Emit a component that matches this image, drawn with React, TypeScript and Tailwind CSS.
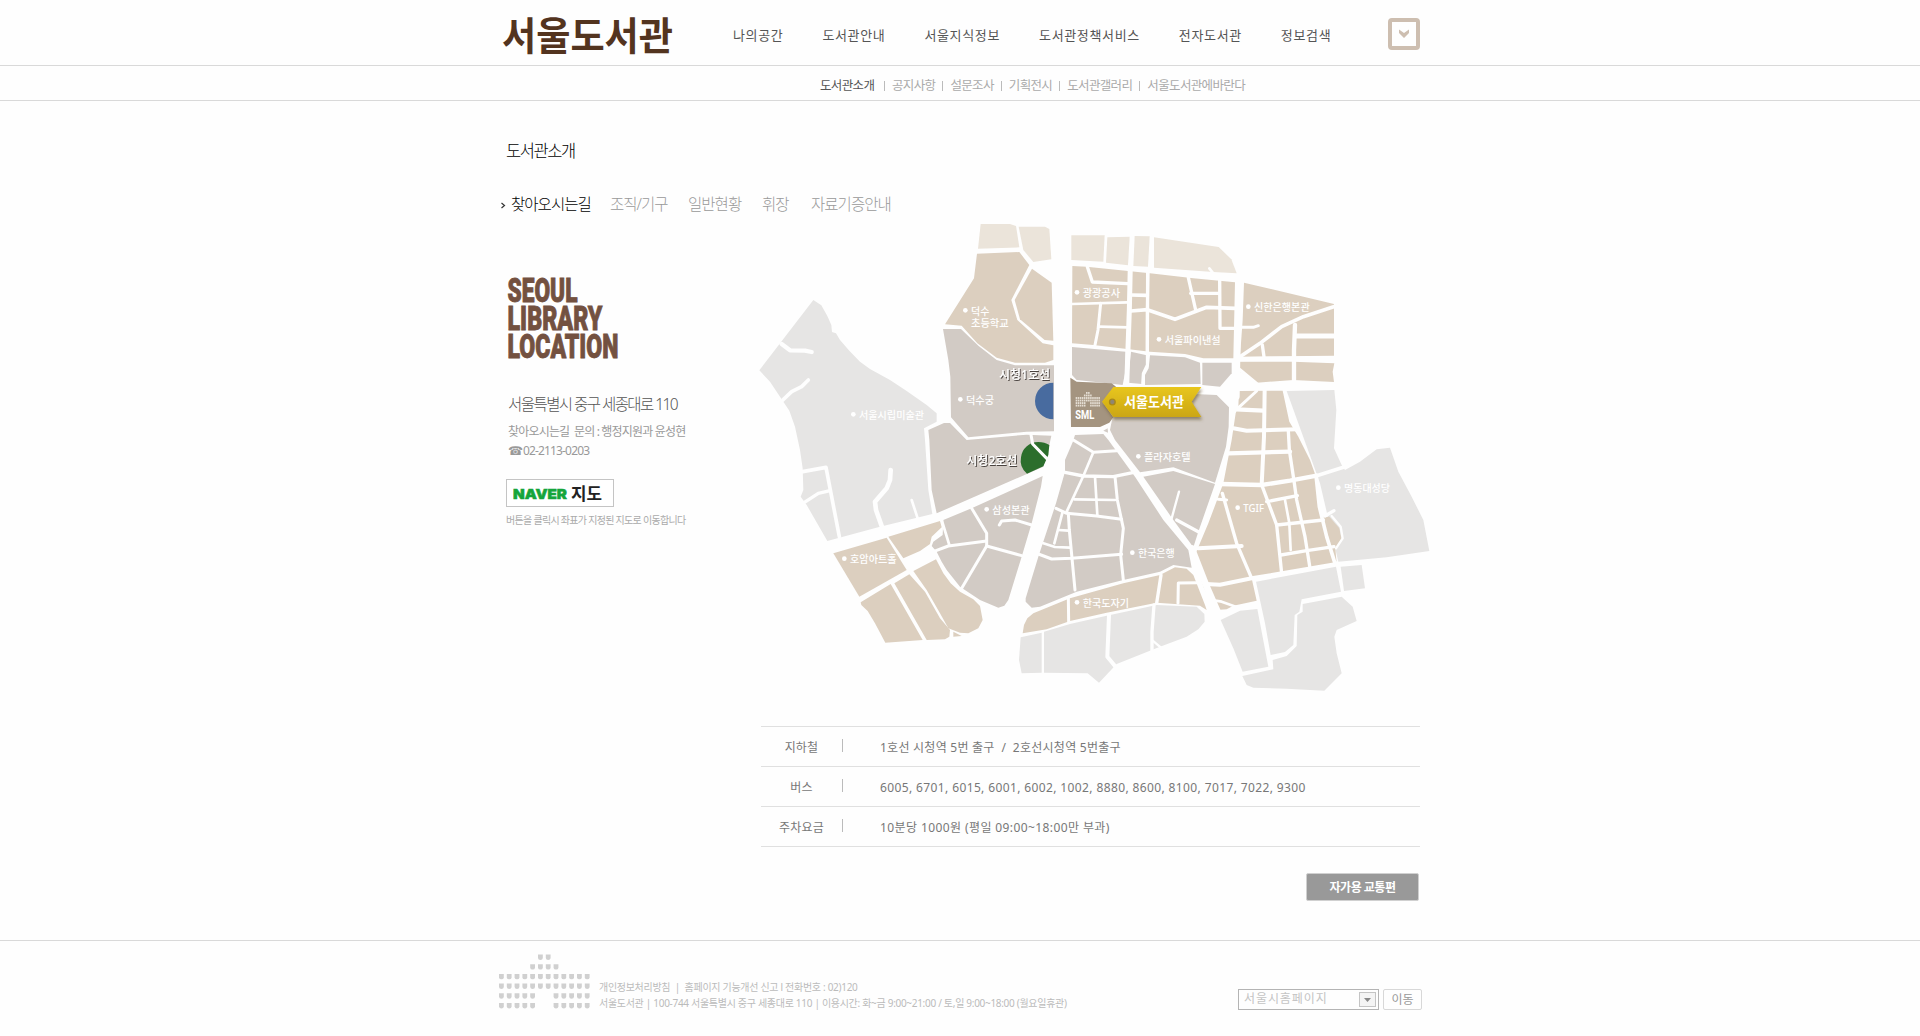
import React from "react";

const KR = "font-['Noto_Sans','Noto_Sans_CJK_KR',sans-serif]";

const BEIGE = "#dccfbf";
const PALE = "#ebe4da";
const TAUPE = "#d2cbc5";
const GREY = "#e6e5e4";

type Road = [string, number];

const Areas = ({ fill, list }: { fill: string; list: string[] }) => (
  <g fill={fill}>
    {list.map((p) => (
      <polygon key={p} points={p} />
    ))}
  </g>
);

const Roads = ({ list }: { list: Road[] }) => (
  <g fill="none" stroke="#fefefe" strokeLinejoin="round" strokeLinecap="round">
    {list.map(([p, w]) => (
      <polyline key={p} points={p} strokeWidth={w} />
    ))}
  </g>
);

const Place = ({ x, y, w, t, dot = true }: { x: number; y: number; w: number; t: string; dot?: boolean }) => (
  <g fill="#fff">
    {dot && <circle cx={x - 17} cy={y - 3} r="7" />}
    <text x={x} y={y + 11} fontSize="30" fontWeight="500" textLength={w} lengthAdjust="spacingAndGlyphs">
      {t}
    </text>
  </g>
);

const Station = ({ x, y, t }: { x: number; y: number; t: string }) => (
  <text
    x={x}
    y={y + 13}
    fill="#fff"
    fontSize="36"
    fontWeight="500"
    textLength="153"
    lengthAdjust="spacingAndGlyphs"
    filter="url(#textShadow)"
  >
    {t}
  </text>
);

const hallRows: number[][] = [
  [5, 6],
  [4, 5, 6, 7],
  [0, 1, 2, 3, 4, 5, 6, 7, 8, 9, 10, 11],
  [0, 1, 2, 3, 4, 5, 6, 7, 8, 9, 10, 11],
  [0, 1, 2, 3, 4, 7, 8, 9, 10, 11],
  [0, 1, 2, 3, 4, 7, 8, 9, 10, 11],
];

function LocationMap() {
  return (
    <svg className={`block h-[480px] w-[680px] shrink-0 ${KR}`} viewBox="45 15 2040 1440">
      <defs>
        <linearGradient id="tag" x1="0" y1="0" x2="0" y2="1">
          <stop offset="0" stopColor="#e8c61f" />
          <stop offset="1" stopColor="#cba612" />
        </linearGradient>
        <filter id="tagShadow" x="-10%" y="-20%" width="120%" height="160%">
          <feDropShadow dx="3" dy="8" stdDeviation="5" floodColor="#5a4a20" floodOpacity="0.55" />
        </filter>
        <filter id="textShadow" x="-10%" y="-20%" width="120%" height="150%">
          <feDropShadow dx="3" dy="3" stdDeviation="2" floodColor="#3a3633" floodOpacity="0.9" />
        </filter>
      </defs>

      {/* West blocks */}
      <Areas
        fill={GREY}
        list={["220,270 244,286 262,318 274,345 276,366 288,370 300,390 328,422 360,455 390,477 450,510 500,543 560,585 590,610 590,635 552,655 555,690 565,840 577,912 420,950 262,993 200,885 182,860 190,840 188,775 180,720 165,650 148,602 130,575 120,560 90,515 58,481"]}
      />
      <Areas fill={PALE} list={["722,42 810,42 828,48 838,112 714,116", "836,50 915,50 928,57 934,148 880,156 850,120"]} />
      <Areas
        fill={BEIGE}
        list={[
          "711,131 838,126 868,165 814,270 832,330 908,400 940,406 940,450 915,458 825,458 770,443 712,400 665,347 615,343 702,205",
          "876,176 935,218 940,392 914,390 840,328 824,270",
        ]}
      />
      <Areas
        fill={TAUPE}
        list={[
          "609,357 663,357 716,408 770,450 825,466 942,466 942,664 860,665 685,682 633,622 631,500 625,450",
          "565,660 612,639 630,639 680,690 860,674 934,677 927,710 910,770 590,910 575,840 568,690",
        ]}
      />
      <path d="M940 518A55 55 0 0 0 940 628Z" fill="#486b9f" />
      <path d="M861 791A51 51 0 0 1 843 742A52 50 0 0 1 895 696Q914 696 928 705L925 735L910 769Z" fill="#2c6e2c" />
      <Roads
        list={[
          ["125,402 150,421 195,422 215,426", 13],
          ["124,574 155,545 185,530 205,510", 11],
          ["188,785 258,772 298,980", 11],
          ["192,878 235,850 270,842", 10],
          ["452,780 450,810 440,835 405,875 408,900 425,948", 14],
          ["515,870 533,925", 8],
          ["873,674 878,702 920,745", 9],
        ]}
      />

      <g transform="translate(0 690)">
        <Areas
          fill={TAUPE}
          list={["610,240 695,205 908,108 903,140 875,250 845,350 805,480 793,497 775,503 720,480 660,440 620,390 605,365 590,335 575,318 580,305 608,285"]}
        />
        <Areas
          fill={BEIGE}
          list={[
            "280,340 440,293 500,390 358,470",
            "445,290 600,243 605,262 575,290 570,312 540,333 490,355",
            "520,393 588,358 610,400 632,430 660,455 700,478 720,498 728,540 715,565 685,580 660,578 625,565 600,520 560,450",
            "463,430 508,403 555,455 600,535 630,570 628,590 615,598 560,600",
            "362,487 452,432 548,600 436,608 405,550 383,513 364,495",
            "640,575 665,588 640,590",
          ]}
        />
        <Roads
          list={[
            ["605,240 628,315", 8],
            ["580,335 625,318 740,303", 9],
            ["695,205 740,280 740,318 665,445", 9],
            ["740,318 845,347", 9],
            ["778,255 785,243 825,240 875,255", 9],
          ]}
        />
      </g>

      {/* North-east blocks */}
      <g transform="translate(960 0)">
        <Areas
          fill={GREY}
          list={["680,543 823,540 829,600 822,715 845,765 855,780 900,755 950,718 990,713 1015,785 1055,860 1090,930 1108,1023 980,1042 835,1055 780,820"]}
        />
        <Areas
          fill={PALE}
          list={[
            "34,76 134,76 130,155 34,150",
            "142,82 209,80 204,166 138,158",
            "224,78 269,79 264,170 220,168",
            "282,82 476,111 514,148 530,190 460,186 282,173",
          ]}
        />
        <Areas
          fill={BEIGE}
          list={[
            "37,168 80,170 270,190 400,205 525,217 520,445 430,445 375,432 270,425 100,405 36,400",
            "552,218 822,282 822,437 740,438 540,441 548,330",
            "540,455 700,455 823,460 818,485 822,516 700,510 590,518 540,485",
            "537,543 668,542 688,635 715,680 750,750 768,800 785,920 808,920 838,955 845,990 826,1015 830,1060 575,1105 590,1172 520,1187 500,1198 470,1200 430,1130 405,1035 445,940 490,820 515,690 527,610 535,590",
          ]}
        />
        <Areas
          fill={TAUPE}
          list={[
            "36,411 197,425 195,490 188,525 100,515 50,510 36,495",
            "213,425 260,436 260,470 248,495 246,522 203,518",
            "270,436 375,442 420,458 422,522 255,525 255,495 266,475",
            "427,458 515,458 515,490 480,530 427,525",
            "160,610 400,552 470,555 507,592 506,650 498,710 465,818 340,772 240,787 165,690 150,660",
            "250,800 340,783 465,822 415,965 400,1012 340,930",
            "45,675 130,672 145,690 225,800 310,930 385,1020 395,1073 340,1065 300,1085 190,1110 50,1145 -60,1190 -85,1193 -103,1175 -103,1165 -65,1040 -12,880 15,785 15,750 38,697",
          ]}
        />
        <path d="M31 503L50 515 155 520 168 530 128 575 160 622 148 638 120 651 33 651Z" fill="#a49480" />
        <path d="M130 662L143 655 144 668Z" fill={TAUPE} />
        <Roads
          list={[
            ["448,175 460,190", 8],
            ["211,165 208,300 200,530", 15],
            ["264,185 262,300 262,465 250,490 248,520", 9],
            ["263,185 262,430", 10],
            ["82,170 97,216 203,221", 10],
            ["36,282 203,277", 8],
            ["122,280 114,360 105,405", 9],
            ["118,350 203,352", 8],
            ["213,255 262,256", 11],
            ["213,303 262,299 345,328 440,292 527,295", 11],
            ["385,203 407,300", 10],
            ["392,250 478,250", 10],
            ["479,210 480,355 530,355", 10],
            ["536,200 530,560", 18],
            ["540,440 600,400 665,350 730,320 830,287", 11],
            ["530,352 580,352 595,347", 9],
            ["607,405 612,440", 10],
            ["705,345 702,420 702,510", 13],
            ["707,378 822,378", 15],
            ["540,447 823,445", 13],
            ["538,478 595,525", 10],
            ["530,598 590,543", 9],
            ["528,598 610,602", 13],
            ["614,540 612,680 605,825", 12],
            ["520,655 560,662 712,658", 12],
            ["505,730 690,725", 13],
            ["685,662 688,720 703,820 710,870 735,980 750,1075", 10],
            ["480,822 605,825 690,812 770,797", 13],
            ["770,797 850,772", 11],
            ["607,830 650,945 665,1090", 10],
            ["620,875 712,857", 10],
            ["675,870 688,940 692,1020", 8],
            ["650,945 790,930", 10],
            ["663,1035 740,1022 822,1010", 10],
            ["768,795 778,890 800,980 828,1070", 11],
            ["795,918 822,902", 10],
            ["815,918 842,950 848,985 828,1015", 7],
            ["475,868 500,870", 9],
            ["487,850 530,1000 575,1105", 10],
            ["415,1015 545,1008", 12],
            ["395,1015 438,1125 475,1210", 20],
            ["438,1122 480,1124 575,1105 830,1062", 12],
            ["455,1170 485,1175 540,1195", 8],
            ["357,845 335,925", 7],
            ["350,930 415,965", 10],
            ["40,690 100,727 170,722", 9],
            ["100,727 70,798 20,905", 8],
            ["15,787 70,798 160,800 218,788", 10],
            ["105,800 112,915", 8],
            ["165,800 172,870 190,955 182,1035 190,1110", 9],
            ["43,868 165,870", 8],
            ["-12,895 20,910 110,918 185,928", 9],
            ["25,910 28,960 45,1140", 9],
            ["8,905 -17,1000", 8],
            ["-5,960 25,962", 8],
            ["-50,1000 -15,1011 30,1013", 8],
            ["-65,1032 -25,1047 35,1045 185,1033", 9],
            ["828,1060 848,1148", 12],
          ]}
        />
      </g>

      {/* South-east blocks */}
      <g transform="translate(960 690)">
        <Areas
          fill={BEIGE}
          list={["-112,580 -108,555 -98,535 -80,520 30,475 190,430 300,405 345,382 380,386 400,405 435,495 440,510 420,497 290,488 140,518 30,543 -40,568"]}
        />
        <Areas
          fill={GREY}
          list={[
            "-118,592 -55,578 -55,698 -115,700 -123,660",
            "-48,575 30,552 140,527 290,495 410,500 433,522 434,545 415,568 380,590 300,620 170,672 117,728 83,700 -48,698",
            "588,425 828,380 843,455 725,478 718,515 704,525 700,615 675,636 632,645 615,550",
            "842,380 905,375 915,445 852,453",
            "728,492 845,470 878,500 890,543 830,570 823,590 830,640 845,700 793,752 680,746 580,743 560,735 547,708 640,688 638,660 680,648 710,618 712,525 728,515",
            "482,540 540,512 592,507 625,680 548,695 520,625",
          ]}
        />
        <Roads
          list={[
            ["25,475 26,545", 9],
            ["303,405 290,490", 10],
            ["354,490 355,429 410,428", 9],
            ["147,525 142,650 168,682", 12],
            ["282,495 276,575 276,632", 10],
            ["278,602 302,622", 7],
          ]}
        />
      </g>

      <g fill="#e6dfd5">
        {hallRows.map((cols, r) => cols.map((c) => <rect key={`${r}-${c}`} x={1007 + c * 6.2} y={546 + r * 7.6} width="4.6" height="5.6" />))}
      </g>
      <text x="1006" y="627" fill="#fff" fontSize="37" fontWeight="700" fontFamily="Roboto, sans-serif" textLength="57" lengthAdjust="spacingAndGlyphs">SML</text>

      <path d="M1086 575L1120 531H1384L1355 575L1384 621H1120Z" fill="url(#tag)" filter="url(#tagShadow)" />
      <circle cx="1117" cy="576" r="8.5" fill="#8f8672" stroke="#a8881a" strokeWidth="4" />
      <text x="1152" y="591" fill="#fff" fontSize="40" fontWeight="700" textLength="180" lengthAdjust="spacingAndGlyphs">서울도서관</text>

      <Place x={693} y={304} w={55} t="덕수" />
      <Place x={693} y={341} w={113} t="초등학교" dot={false} />
      <Place x={678} y={571} w={84} t="덕수궁" />
      <Place x={357} y={616} w={195} t="서울시립미술관" />
      <Place x={1028} y={250} w={112} t="광광공사" />
      <Place x={1542} y={293} w={167} t="신한은행본관" />
      <Place x={1274} y={391} w={168} t="서울파이낸설" />
      <Place x={1212} y={742} w={140} t="플라자호텔" />
      <Place x={1194} y={1031} w={110} t="한국은행" />
      <Place x={1028} y={1180} w={139} t="한국도자기" />
      <Place x={1510} y={896} w={62} t="TGIF" />
      <Place x={1812} y={836} w={138} t="명동대성당" />
      <Place x={757} y={901} w={112} t="삼성본관" />
      <Place x={330} y={1049} w={140} t="호암아트홀" />
      <Station x={777} y={495} t="시청1호선" />
      <Station x={679} y={753} t="시청2호선" />
    </svg>
  );
}

const nav = ["나의공간", "도서관안내", "서울지식정보", "도서관정책서비스", "전자도서관", "정보검색"];
const subnav = ["공지사항", "설문조사", "기획전시", "도서관갤러리", "서울도서관에바란다"];
const rows: [string, string, string][] = [
  ["지하철", "1호선 시청역 5번 출구  /  2호선시청역 5번출구", "tracking-[0.25px]"],
  ["버스", "6005, 6701, 6015, 6001, 6002, 1002, 8880, 8600, 8100, 7017, 7022, 9300", "tracking-[0.38px]"],
  ["주차요금", "10분당 1000원 (평일 09:00~18:00만 부과)", "tracking-[0.4px]"],
];

export default function App() {
  return (
    <div className={`h-[1036px] overflow-hidden bg-[#fefefe] whitespace-pre ${KR}`}>
      <header className="h-[66px] border-b border-[#d9d9d9]">
        <div className="mx-auto flex h-[65px] w-[920px]">
          <svg className="h-[65px] w-[175px]" viewBox="0 0 175 65">
            <text x="2" y="49.5" fontSize="39" fontWeight="700" fill="#53341f" textLength="171" lengthAdjust="spacingAndGlyphs">서울도서관</text>
          </svg>
          <nav className="ml-[58px] flex h-[72px] items-center gap-[39px] text-[13px] tracking-[0.64px] text-[#555]">
            {nav.map((n) => (
              <a key={n}>{n}</a>
            ))}
          </nav>
          <button className="mt-[18px] ml-auto flex size-8 items-center justify-center rounded-[4px] border-4 border-[#cdbeb0]">
            <svg className="size-[10px]" viewBox="0 0 10 10">
              <path d="M0 0.5L5 4L10 0.5V4L5 9L0 4Z" fill="#cdbeb0" />
            </svg>
          </button>
        </div>
      </header>

      <div className="h-[35px] border-b border-[#d9d9d9]">
        <div className="mx-auto flex h-[40px] w-[920px] items-center pl-[320px] text-[12.5px] tracking-[-0.65px] text-[#aaa]">
          <a className="mr-[9px] w-[55px] text-[#555]">도서관소개</a>
          {subnav.map((s) => (
            <React.Fragment key={s}>
              <i className="mr-[7px] h-[10px] w-px bg-[#bbb]" />
              <a className="mr-[7px]">{s}</a>
            </React.Fragment>
          ))}
        </div>
      </div>

      <main className="mx-auto flex h-[839px] w-[920px] flex-col">
        <h1 className="mt-[37px] ml-[6px] h-[26px] text-[16.5px] leading-[26px] font-light tracking-[-1.4px] text-black">도서관소개</h1>
        <div className="mt-[31px] flex h-5 items-center text-[15.5px] font-light tracking-[-0.95px] text-[#999]">
          <svg className="mt-px ml-px w-[5px]" viewBox="0 0 5 7">
            <path d="M0.5 1L3.5 3.5L0.5 6" fill="none" stroke="#333" strokeWidth="1.2" />
          </svg>
          <a className="ml-[5px] w-[99px] text-black">찾아오시는길</a>
          <a className="w-[78px]">조직/기구</a>
          <a className="w-[74px]">일반현황</a>
          <a className="w-[49px]">휘장</a>
          <a>자료기증안내</a>
        </div>

        <div className="flex">
          <aside className="flex w-[255px] shrink-0 flex-col pl-[6px]">
            <svg className="mt-[50px] h-[98px] w-[118px]" viewBox="0 -10 118 98">
              <g fill="#735140" stroke="#735140" strokeWidth="0.9" fontFamily="Roboto, sans-serif" fontSize="33" fontWeight="900">
                <text x="1.5" y="26.5" textLength="70" lengthAdjust="spacingAndGlyphs">SEOUL</text>
                <text x="1.5" y="54.5" textLength="95" lengthAdjust="spacingAndGlyphs">LIBRARY</text>
                <text x="1.5" y="83" textLength="111" lengthAdjust="spacingAndGlyphs">LOCATION</text>
              </g>
            </svg>
            <p className="mt-[29px] ml-[2px] h-6 text-[15.5px] leading-6 font-light tracking-[-1.55px] text-[#555]">서울특별시 중구 세종대로 110</p>
            <p className="mt-[7px] ml-[2px] h-[18px] text-[12px] leading-[18px] tracking-[-0.82px] text-[#999]">찾아오시는길  문의 : 행정지원과 윤성현</p>
            <p className="mt-px ml-[2px] flex h-[18px] items-center text-[12px] tracking-[-0.85px] text-[#999]">
              <span className="w-[15px] font-['DejaVu_Sans'] text-[12px]">☎</span>02-2113-0203
            </p>
            <button className="mt-[19px] flex h-7 w-[108px] items-center border border-[#c4c4c4] bg-white pl-[6px]">
              <svg className="h-[26px] w-[94px]" viewBox="0 0 94 26">
                <text x="0" y="18.5" fontFamily="Inter, sans-serif" fontWeight="900" fontSize="13.5" fill="#15a53b" stroke="#15a53b" strokeWidth="0.5" textLength="54" lengthAdjust="spacingAndGlyphs">NAVER</text>
                <text x="58" y="19.5" fontWeight="700" fontSize="17" fill="#222" textLength="31" lengthAdjust="spacingAndGlyphs">지도</text>
              </svg>
            </button>
            <p className="mt-[4px] h-[18px] text-[10px] leading-[18px] tracking-[-0.7px] text-[#aaa]">버튼을 클릭시 좌표가 지정된 지도로 이동합니다</p>
          </aside>
          <LocationMap />
        </div>

        <div className="mt-[31px] ml-[261px] border-t border-[#e0e0e0] text-[12px] text-[#777]">
          {rows.map(([a, b, c]) => (
            <div key={a} className="flex h-10 items-center border-b border-[#e0e0e0] pt-[2px]">
              <span className="w-[81px] text-center tracking-[0.2px]">{a}</span>
              <i className="mr-[37px] mb-[4px] h-[13px] w-px bg-[#bbb]" />
              <span className={c}>{b}</span>
            </div>
          ))}
        </div>
        <button className="mt-[26px] mr-px ml-auto h-7 w-[113px] rounded-[2px] border border-[#d0d0d0] bg-[#999] pt-px text-[12px] leading-[26px] font-bold tracking-[-0.5px] text-white">자가용 교통편</button>
      </main>

      <footer className="border-t border-[#d9d9d9]">
        <div className="mx-auto flex w-[924px] pl-px">
          <svg className="mt-[13px] h-[56px] w-[92px]" viewBox="0 0 92 56" fill="#d0d0d0">
            {hallRows.map((cols, r) =>
              cols.map((c) => (
                <path key={`${r}-${c}`} transform={`translate(${c * 7.8} ${r * 9.7 + 0.5})`} d="M0 0H4.8V3.5Q4.6 5.4 2.4 5.4Q0.2 5.4 0 3.5Z" />
              ))
            )}
          </svg>
          <div className="mt-[38px] ml-2 text-[10px] leading-4 text-[#bbb]">
            <p className="tracking-[-0.3px]">개인정보처리방침  |  홈페이지 기능개선 신고 l 전화번호 : 02)120</p>
            <p className="tracking-[-0.3px]">서울도서관 | 100-744 서울특별시 중구 세종대로 110 | 이용시간: 화~금 9:00~21:00 / 토,일 9:00~18:00 (월요일휴관)</p>
          </div>
          <div className="mt-[48px] ml-auto flex gap-1 text-[12px] text-[#c4c4c4]">
            <div className="flex h-[21px] w-[141px] items-center justify-between border border-[#b4b4b4] pr-[2px] pl-[5px]">
              <span className="mb-px tracking-[0.9px]">서울시홈페이지</span>
              <span className="flex h-[15px] w-[17px] items-center justify-center border border-[#c4c4c4] bg-[#f4f4f4]">
                <svg className="h-1 w-[7px]" viewBox="0 0 7 4"><path d="M0 0H7L3.5 4Z" fill="#888" /></svg>
              </span>
            </div>
            <button className="h-[21px] w-[39px] rounded-[2px] border border-[#d8d8d8] leading-[18px] text-[#999]">이동</button>
          </div>
        </div>
      </footer>
    </div>
  );
}
